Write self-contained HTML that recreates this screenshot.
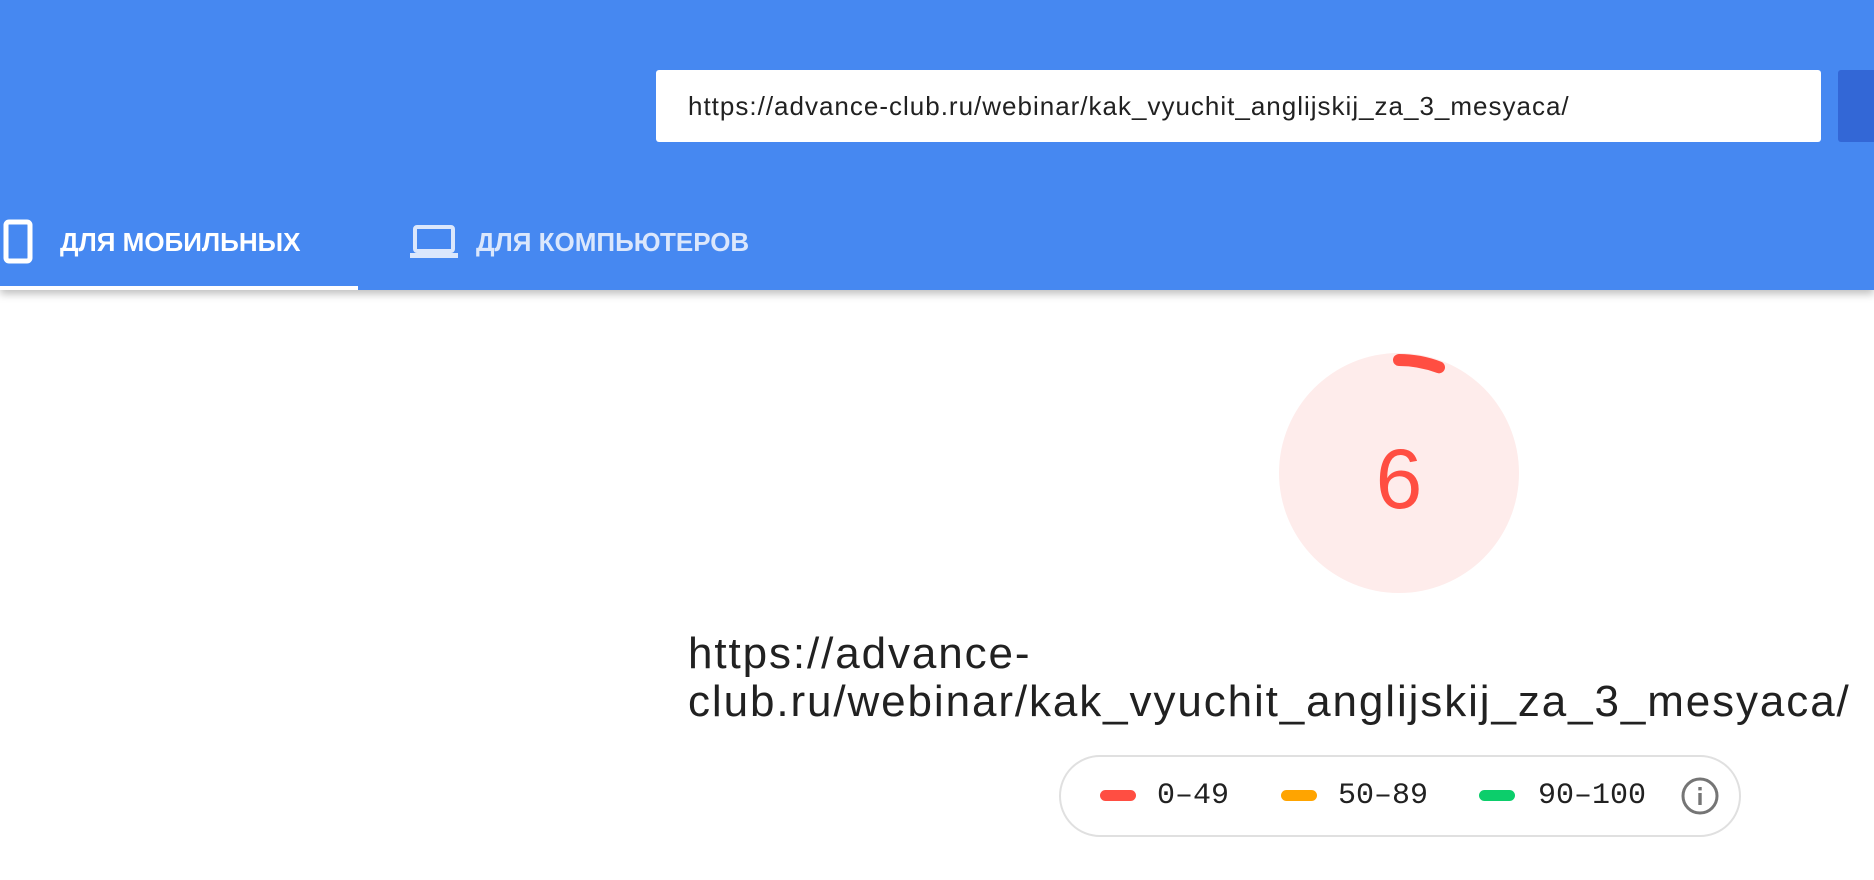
<!DOCTYPE html>
<html><head><meta charset="utf-8"><style>
*{margin:0;padding:0;box-sizing:border-box}
body{width:1874px;height:880px;overflow:hidden;background:#fff;font-family:"Liberation Sans",sans-serif;position:relative}
.hdr{position:absolute;left:0;top:0;width:1874px;height:290px;background:#4688F1;box-shadow:0 4px 8px rgba(0,0,0,.25)}
.inp{position:absolute;left:656px;top:70px;width:1165px;height:72px;background:#fff;border-radius:3px;font-size:26px;letter-spacing:1px;color:#212121;padding-left:32px;line-height:72px}
.btn{position:absolute;left:1838px;top:70px;width:60px;height:72px;background:#3367D6;border-radius:3px}
.tab{position:absolute;top:222px;font-size:26px;font-weight:bold;line-height:40px}
.ul{position:absolute;left:0;top:286px;width:358px;height:4px;background:#fff}
.url{position:absolute;left:688px;top:630px;font-size:44px;letter-spacing:1.9px;line-height:48px;color:#212121}
.pill{position:absolute;left:1059px;top:755px;width:682px;height:82px;border:2px solid #e0e0e0;border-radius:41px}
.bar{position:absolute;top:790px;width:36px;height:11px;border-radius:6px}
.lt{position:absolute;top:776px;font-family:"Liberation Mono",monospace;font-size:30px;line-height:40px;color:#212121}
</style></head><body>
<div class="hdr">
<div class="inp">https://advance-club.ru/webinar/kak_vyuchit_anglijskij_za_3_mesyaca/</div>
<div class="btn"></div>
<svg style="position:absolute;left:3px;top:219px" width="30" height="45" viewBox="0 0 30 45"><rect x="3" y="3" width="24" height="39" rx="3" fill="none" stroke="#fff" stroke-width="5"/></svg>
<div class="tab" style="left:60px;color:#fff">ДЛЯ МОБИЛЬНЫХ</div>
<svg style="position:absolute;left:410px;top:225px" width="50" height="34" viewBox="0 0 50 34"><rect x="5" y="2" width="38" height="24" rx="2" fill="none" stroke="#dbe7fc" stroke-width="4"/><rect x="0" y="28" width="48" height="5" fill="#dbe7fc"/></svg>
<div class="tab" style="left:476px;color:#dbe7fc">ДЛЯ КОМПЬЮТЕРОВ</div>
<div class="ul"></div>
</div>
<svg style="position:absolute;left:1275px;top:349px" width="250" height="250" viewBox="0 0 250 250">
<circle cx="124" cy="124" r="120" fill="#FEECEB"/>
<path d="M124 11 A113 113 0 0 1 164 18.3" fill="none" stroke="#FF4E42" stroke-width="12" stroke-linecap="round"/>
<text x="124" y="159" text-anchor="middle" font-family="Liberation Sans,sans-serif" font-size="84" fill="#FF4E42">6</text>
</svg>
<div class="url">https://advance-<br>club.ru/webinar/kak_vyuchit_anglijskij_za_3_mesyaca/</div>
<div class="pill"></div>
<div class="bar" style="left:1100px;background:#FF4E42"></div><div class="lt" style="left:1157px">0–49</div>
<div class="bar" style="left:1281px;background:#FFA400"></div><div class="lt" style="left:1338px">50–89</div>
<div class="bar" style="left:1479px;background:#0CCE6B"></div><div class="lt" style="left:1538px">90–100</div>
<svg style="position:absolute;left:1680px;top:776px" width="40" height="40" viewBox="0 0 40 40"><circle cx="20" cy="20" r="17" fill="none" stroke="#757575" stroke-width="3"/><rect x="18.3" y="17" width="3.4" height="12" fill="#757575"/><rect x="18.3" y="11" width="3.4" height="3.4" fill="#757575"/></svg>
</body></html>
